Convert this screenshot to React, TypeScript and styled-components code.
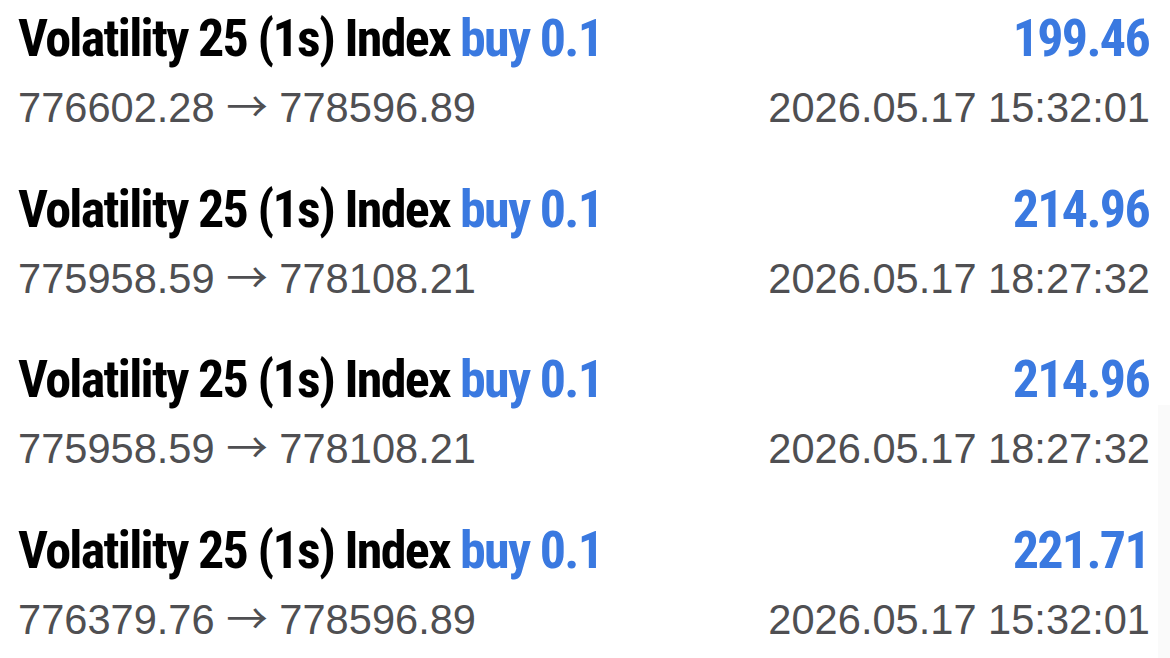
import React from 'react';
import styled, { createGlobalStyle } from 'styled-components';

const GlobalStyle = createGlobalStyle`
  html, body {
    margin: 0;
    padding: 0;
    background: #ffffff;
  }
  body {
    font-family: "Liberation Sans", Arial, sans-serif;
  }
`;

const List = styled.div`
  display: flex;
  flex-direction: column;
  width: 1170px;
  height: 658px;
  padding: 0 20px 0 18px;
  box-sizing: border-box;
  overflow: hidden;
  position: relative;
`;

const Row = styled.div`
  display: flex;
  flex-direction: column;
  height: 170.5px;
  padding-top: 9px;
  box-sizing: border-box;
  flex-shrink: 0;
`;

const Line = styled.div`
  display: flex;
  justify-content: space-between;
  align-items: baseline;
`;

const Title = styled.div`
  font-family: Roboto, "Open Sans", sans-serif;
  font-stretch: 87.5%;
  font-weight: 700;
  font-size: 52px;
  line-height: 60px;
  letter-spacing: -1.7px;
  color: #000;
  white-space: nowrap;
`;

const Side = styled.span`
  color: #3a79e0;
`;

const Profit = styled(Title)`
  color: #3a79e0;
  margin-right: 1px;
`;

const Sub = styled.div`
  font-family: "Liberation Sans", Arial, sans-serif;
  font-size: 41.6px;
  line-height: 50px;
  color: #4f4f52;
  white-space: nowrap;
  margin-top: 14px;
`;

const Arrow = styled.span`
  font-family: "Noto Sans CJK SC", "Noto Sans", sans-serif;
  line-height: 1;
`;

// faint track on the right edge, lower half
const Track = styled.div`
  position: absolute;
  right: 0;
  top: 405px;
  bottom: 0;
  width: 12px;
  background: #fafafa;
`;

interface Deal {
  symbol: string;
  side: string;
  volume: string;
  open: string;
  close: string;
  profit: string;
  time: string;
}

const deals: Deal[] = [
  { symbol: 'Volatility 25 (1s) Index', side: 'buy', volume: '0.1', open: '776602.28', close: '778596.89', profit: '199.46', time: '2026.05.17 15:32:01' },
  { symbol: 'Volatility 25 (1s) Index', side: 'buy', volume: '0.1', open: '775958.59', close: '778108.21', profit: '214.96', time: '2026.05.17 18:27:32' },
  { symbol: 'Volatility 25 (1s) Index', side: 'buy', volume: '0.1', open: '775958.59', close: '778108.21', profit: '214.96', time: '2026.05.17 18:27:32' },
  { symbol: 'Volatility 25 (1s) Index', side: 'buy', volume: '0.1', open: '776379.76', close: '778596.89', profit: '221.71', time: '2026.05.17 15:32:01' },
];

const App: React.FC = () => {
  return (
    <>
      <GlobalStyle />
      <List>
        {deals.map((d, i) => (
          <Row key={i}>
            <Line>
              <Title>
                {d.symbol} <Side>{d.side} {d.volume}</Side>
              </Title>
              <Profit>{d.profit}</Profit>
            </Line>
            <Line>
              <Sub>
                {d.open} <Arrow>→</Arrow> {d.close}
              </Sub>
              <Sub>{d.time}</Sub>
            </Line>
          </Row>
        ))}
        <Track />
      </List>
    </>
  );
};

export default App;
